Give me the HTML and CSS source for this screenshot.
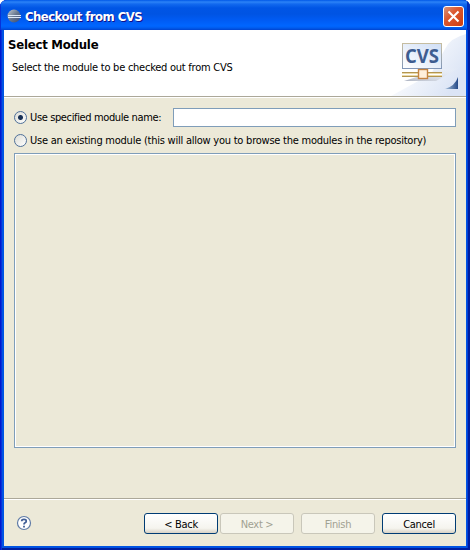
FILE: index.html
```
<!DOCTYPE html>
<html lang="en">
<head>
<meta charset="utf-8">
<title>Checkout from CVS</title>
<link rel="stylesheet" href="styles.css">
</head>
<body>
<div class="window">
  <div class="titlebar">
    <svg class="app-icon" width="14" height="14" viewBox="0 0 14 14">
      <defs><linearGradient id="ball" x1="0" y1="0" x2="1" y2="1"><stop offset="0" stop-color="#c4ccd4"/><stop offset=".5" stop-color="#68788f"/><stop offset="1" stop-color="#354878"/></linearGradient></defs>
      <circle cx="7" cy="7" r="6.5" fill="url(#ball)"/>
      <path d="M1 6.5h13M1 8.5h13" stroke="#dce8f8"/>
    </svg>
    <span class="title">Checkout from CVS</span>
    <button class="close" aria-label="Close"><svg width="19" height="19" viewBox="0 0 19 19"><path d="M4.5 4.5l10 10M14.5 4.5l-10 10" stroke="#fff" stroke-width="2.1"/></svg></button>
  </div>
  <div class="body">
    <header class="banner">
      <div class="banner-text">
        <h1>Select Module</h1>
        <p>Select the module to be checked out from CVS</p>
      </div>
      <svg class="banner-art" width="75" height="66" viewBox="0 0 75 66">
        <defs>
          <linearGradient id="bg" x1="0" y1="0" x2="1" y2=".6"><stop offset=".25" stop-color="#fff"/><stop offset="1" stop-color="#dbe4f5"/></linearGradient>
          <linearGradient id="screen" x1="1" y1="0" x2="0" y2="1"><stop offset="0" stop-color="#cfdef6"/><stop offset="1" stop-color="#fff"/></linearGradient>
          <linearGradient id="frame" x1="0" y1="0" x2="0" y2="1"><stop offset="0" stop-color="#c6bda0"/><stop offset="1" stop-color="#8297b8"/></linearGradient>
          <linearGradient id="shade" x1="0" y1="1" x2="1" y2="0"><stop offset="0" stop-color="#aab1c0"/><stop offset="1" stop-color="#fff" stop-opacity="0"/></linearGradient>
          <linearGradient id="tri" x1="0" y1="0" x2="1" y2="0"><stop offset="0" stop-color="#a8c0da"/><stop offset="1" stop-color="#254a88"/></linearGradient>
        </defs>
        <path d="M75 4Q59 8 54 19L40 44 0 66h75z" fill="url(#bg)"/>
        <path d="M13 51L51 39 68 38 45 51z" fill="url(#shade)"/>
        <rect x="11.5" y="13.5" width="39" height="25" fill="url(#screen)" stroke="url(#frame)"/>
        <text x="14" y="33" textLength="34" lengthAdjust="spacingAndGlyphs" class="cvs">CVS</text>
        <path d="M31 39v4" stroke="#9b8c68"/>
        <path d="M11 42.5h40M11 46.5h40" stroke="#b39550"/>
        <path d="M11 43.5h40M11 45.5h40" stroke="#ead9a6"/>
        <path d="M11 44.5h40" stroke="#fff"/>
        <rect x="27.5" y="39.5" width="9" height="9" fill="#fff0dc" stroke="#c58442" stroke-width="1.4"/>
        <path d="M67 47v12H54Q64 56 67 47z" fill="url(#tri)"/>
      </svg>
    </header>
    <main class="content">
      <div class="row row-first">
        <span class="radio checked"></span>
        <span class="label l-name">Use specified module name:</span>
        <input class="field" type="text" aria-label="Module name">
      </div>
      <div class="row row-second">
        <span class="radio"></span>
        <span class="label l-existing">Use an existing module (this will allow you to browse the modules in the repository)</span>
      </div>
      <div class="tree"></div>
    </main>
    <footer class="footer">
      <svg class="help" width="16" height="16" viewBox="0 0 16 16"><circle cx="8" cy="8" r="6.5" fill="#fff" stroke="#5f7ba6" stroke-width="1.2"/><path d="M5.7 6.3Q5.7 4.3 8 4.3T10.2 6.2Q10.2 7.2 9 7.8 8 8.3 8 9.6M8 10.7v1.7" fill="none" stroke="#405e96" stroke-width="1.8"/></svg>
      <button class="btn">&lt; Back</button>
      <button class="btn next" disabled>Next &gt;</button>
      <button class="btn finish" disabled>Finish</button>
      <button class="btn cancel">Cancel</button>
    </footer>
  </div>
</div>
</body>
</html>
```
FILE: styles.css
```
* { box-sizing: border-box; }
body {
  margin: 0;
  background: #fff;
  font: 11px "DejaVu Sans Condensed", "DejaVu Sans", sans-serif;
  font-stretch: condensed;
  color: #000;
}
.window {
  width: 470px;
  height: 550px;
  padding: 0 4px 4px;
  display: flex;
  flex-direction: column;
  border-radius: 7px 7px 0 0;
  background: #0054e3;
  box-shadow: inset 1px 0 #0019cf, inset 2px 0 #0831d9, inset -2px 0 #001ea0, inset 0 -2px #001ea0, inset -3px 0 #0441d8;
  overflow: hidden;
}
.titlebar {
  height: 30px;
  flex: none;
  margin: 0 -4px;
  padding: 2px 7px 0;
  display: flex;
  align-items: center;
  background: linear-gradient(#0058e8 0, #2c83f7 2px, #1269ef 4px, #0055e5 8px, #0054e3 14px, #005bf3 20px, #0066ff 26px, #005bed 28px, #0043cf 30px);
  box-shadow: inset 1px 0 #0831d9, inset -3px 0 #002bb8;
}
.title {
  margin-left: 4px;
  font-size: 13px;
  font-weight: bold;
  letter-spacing: -0.55px;
  color: #fff;
  text-shadow: 1px 1px #0f1089;
  white-space: nowrap;
}
.close {
  width: 21px;
  height: 21px;
  margin-left: auto;
  margin-right: -1px;
  padding: 0;
  display: flex;
  border: 1px solid #fff;
  border-radius: 3px;
  background: linear-gradient(135deg, #d4947c, #dc5830 40%, #cf3d10);
}
.body { flex: 1; display: flex; flex-direction: column; background: #ece9d8; }
.banner {
  height: 67px;
  display: flex;
  justify-content: space-between;
  background: #fff;
  border-bottom: 1px solid #aca899;
}
.banner-text { padding: 7px 0 0 4px; white-space: nowrap; }
h1 { margin: 0; font-size: 13px; line-height: 16px; letter-spacing: -0.22px; }
p { margin: 7px 0 0 4px; line-height: 15px; letter-spacing: -0.25px; }
.cvs { font: bold 19px "Open Sans", sans-serif; fill: #3d5c90; }
.content {
  height: 402px;
  padding: 11px 10px 0;
  border-top: 1px solid #fff;
  border-bottom: 1px solid #aca899;
  display: flex;
  flex-direction: column;
}
.row { display: flex; align-items: center; white-space: nowrap; }
.row-first { height: 19px; margin-top: -1px; }
.row-second { height: 15px; margin-top: 6px; }
.radio {
  width: 13px;
  height: 13px;
  flex: none;
  border: 1px solid #4f7099;
  border-radius: 50%;
  background: linear-gradient(135deg, #dcdcd5, #fff);
}
.checked { background: radial-gradient(circle, #173055 0 2px, transparent 3px), linear-gradient(135deg, #dcdcd5, #fff); }
.label { margin-left: 3px; }
.l-name { width: 143px; letter-spacing: -0.37px; }
.l-existing { letter-spacing: -0.235px; }
.field {
  flex: 1;
  min-width: 0;
  height: 19px;
  padding: 0 3px;
  border: 1px solid #7f9db9;
  background: #fff;
  font: inherit;
}
.tree { height: 295px; margin-top: 5px; border: 1px solid #7f9db9; box-shadow: inset 0 0 0 1px #fff; }
.footer {
  flex: 1;
  display: flex;
  align-items: flex-start;
  padding: 13px 10px 0 12px;
  border-top: 1px solid #fff;
}
.help { margin-right: 112px; margin-top: 2px; }
.btn {
  width: 74px;
  height: 21px;
  padding: 1px 0 0;
  border: 1px solid #003c74;
  border-radius: 3px;
  background: linear-gradient(#fff, #f5f4ee 75%, #d8d2c5);
  font: inherit;
  letter-spacing: -0.3px;
  color: #000;
}
.btn:disabled { border-color: #c9c7ba; background: #f5f4ea; color: #a1a192; }
.next { margin-left: 2px; }
.finish { margin-left: 7px; }
.cancel { margin-left: 7px; }
```
